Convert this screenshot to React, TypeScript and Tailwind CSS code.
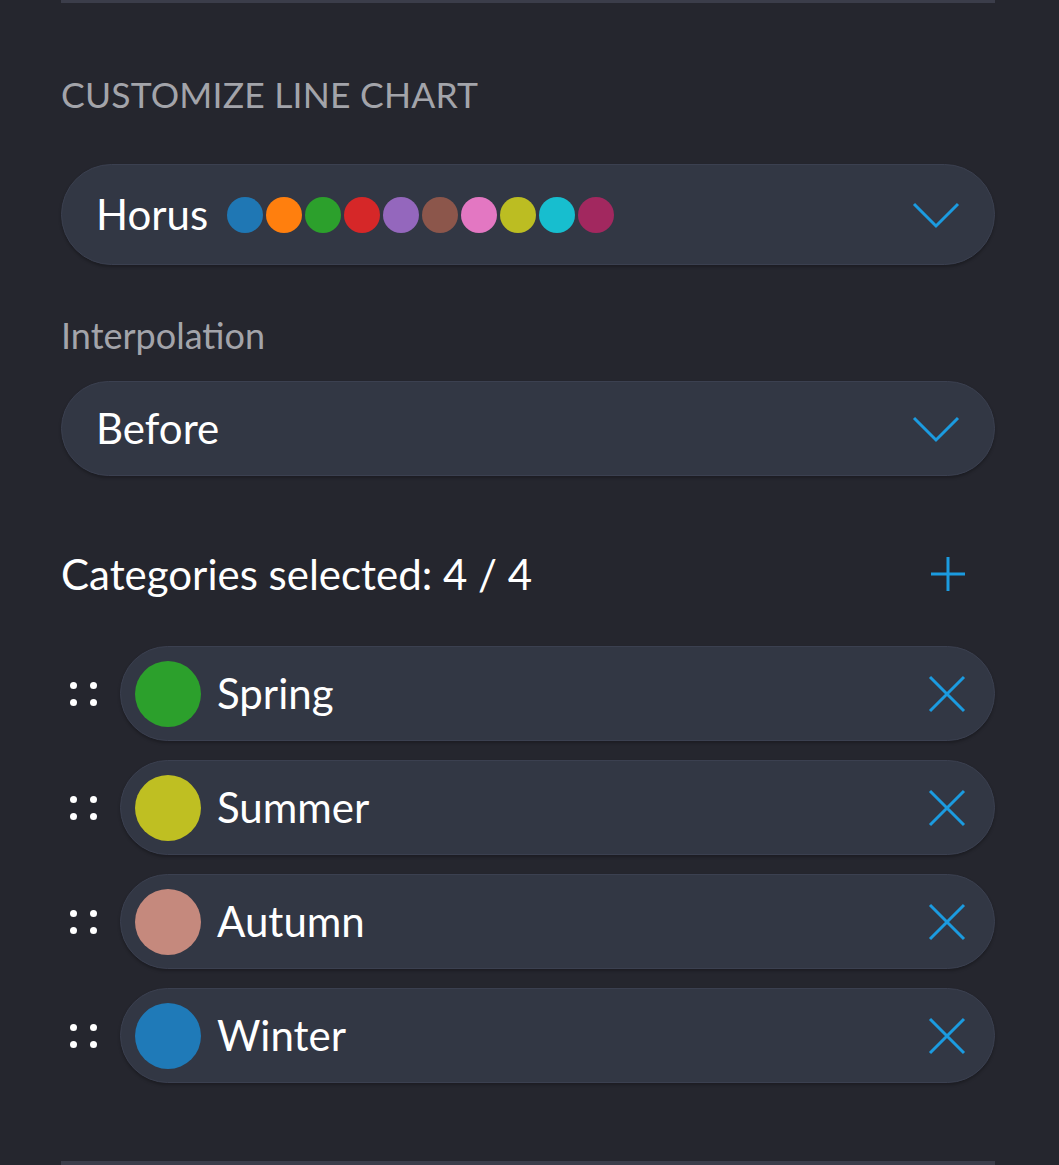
const palette = [
  "#1f77b4",
  "#ff7f0e",
  "#2ca02c",
  "#d62728",
  "#9467bd",
  "#8c564b",
  "#e377c2",
  "#bcbd22",
  "#17becf",
  "#a2285f",
]

const categories = [
  { name: "Spring", color: "#2ca02c" },
  { name: "Summer", color: "#bfbf22" },
  { name: "Autumn", color: "#c5897d" },
  { name: "Winter", color: "#1f7ab8" },
]

function Chevron() {
  return (
    <svg width="48" height="28" viewBox="0 0 48 28" className="ml-auto" fill="none">
      <polyline points="2,3 24,25 46,3" stroke="#1b9be0" strokeWidth="3" />
    </svg>
  )
}

function PlusIcon() {
  return (
    <svg width="36" height="36" viewBox="0 0 36 36" fill="none">
      <path d="M18 1v34M1 18h34" stroke="#1b9be0" strokeWidth="3" />
    </svg>
  )
}

function CloseIcon() {
  return (
    <svg width="38" height="38" viewBox="0 0 38 38" className="ml-auto" fill="none">
      <path d="M2 2l34 34M36 2L2 36" stroke="#1b9be0" strokeWidth="3" />
    </svg>
  )
}

function DragHandle() {
  return (
    <div className="grid w-[28px] grid-cols-2 gap-x-[12px] gap-y-[10px]">
      <span className="h-[7px] w-[7px] rounded-full bg-white" />
      <span className="h-[7px] w-[7px] rounded-full bg-white" />
      <span className="h-[7px] w-[7px] rounded-full bg-white" />
      <span className="h-[7px] w-[7px] rounded-full bg-white" />
    </div>
  )
}

export default function App() {
  return (
    <div
      className="min-h-[1165px] w-full bg-[#25262e] text-white"
      style={{ fontFamily: "Lato, 'Open Sans', sans-serif" }}
    >
      <div className="px-[61px] pr-[64px]">
        {/* top divider */}
        <div className="h-[3px] bg-[#3b3d4a]" />

        <h2 className="mt-[72px] text-[35.5px] leading-[40px] tracking-[0.2px] text-[#a3a4aa]">
          CUSTOMIZE LINE CHART
        </h2>

        {/* palette select */}
        <div className="mt-[49px] flex h-[101px] items-center rounded-full border border-[#3b4050] bg-[#323744] pl-[34px] pr-[34px] shadow-[0_2px_3px_rgba(0,0,0,0.25)]">
          <span className="text-[42px]">Horus</span>
          <div className="ml-[19px] flex gap-[3px]">
            {palette.map((c) => (
              <span key={c} className="h-[36px] w-[36px] rounded-full" style={{ backgroundColor: c }} />
            ))}
          </div>
          <Chevron />
        </div>

        <div className="mt-[50px] text-[36px] leading-[40px] text-[#a3a4aa]">Interpolation</div>

        {/* interpolation select */}
        <div className="mt-[26px] flex h-[95px] items-center rounded-full border border-[#3b4050] bg-[#323744] pl-[34px] pr-[34px] shadow-[0_2px_3px_rgba(0,0,0,0.25)]">
          <span className="text-[42px]">Before</span>
          <Chevron />
        </div>

        <div className="mt-[74px] flex items-center justify-between">
          <span className="text-[42px] leading-[48px]">Categories selected: 4 / 4</span>
          <div className="mr-[29px]">
            <PlusIcon />
          </div>
        </div>

        {/* category rows */}
        <div className="mt-[48px] flex flex-col gap-[19px]">
          {categories.map((cat) => (
            <div key={cat.name} className="flex items-center">
              <div className="ml-[9px] mr-[22px]">
                <DragHandle />
              </div>
              <div className="flex h-[95px] flex-1 items-center rounded-full border border-[#3b4050] bg-[#323744] pl-[14px] pr-[28px] shadow-[0_2px_3px_rgba(0,0,0,0.25)]">
                <span className="h-[66px] w-[66px] rounded-full" style={{ backgroundColor: cat.color }} />
                <span className="ml-[16px] text-[42px]">{cat.name}</span>
                <CloseIcon />
              </div>
            </div>
          ))}
        </div>

        <div className="mt-[78px] h-[4px] bg-[#3b3d4a]" />
      </div>
    </div>
  )
}
